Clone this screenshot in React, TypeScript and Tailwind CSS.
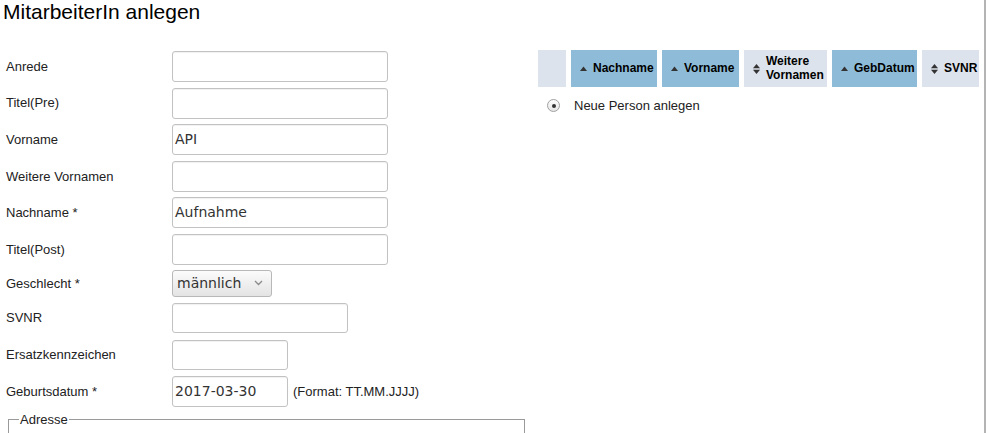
const labelFont = { fontFamily: '"Liberation Sans", Arial, sans-serif' };

function SortUp() {
  return (
    <svg width="7" height="5" viewBox="0 0 7 5" className="shrink-0">
      <path d="M0 5 L3.5 0.5 L7 5 Z" fill="#333" />
    </svg>
  );
}

function SortBoth() {
  return (
    <svg width="7" height="10" viewBox="0 0 7 10" className="shrink-0">
      <path d="M0 4.3 L3.5 0 L7 4.3 Z" fill="#333" />
      <path d="M0 5.7 L3.5 10 L7 5.7 Z" fill="#333" />
    </svg>
  );
}

type Col = { label: string[]; width: number; sorted: boolean };

const columns: Col[] = [
  { label: ['Nachname'], width: 86, sorted: true },
  { label: ['Vorname'], width: 77, sorted: true },
  { label: ['Weitere', 'Vornamen'], width: 83, sorted: false },
  { label: ['GebDatum'], width: 85, sorted: true },
  { label: ['SVNR'], width: 57, sorted: false },
  { label: [''], width: 60, sorted: false },
];

function TextInput({ width, value = '', h = 31 }: { width: number; value?: string; h?: number }) {
  return (
    <div
      className="flex items-center border border-[#c2c2c2] rounded-[3px] bg-white shadow-[inset_0_1px_1px_rgba(0,0,0,0.06)] pl-[2px] text-[14px] text-[#333]"
      style={{ width, height: h, fontFamily: '"DejaVu Sans", sans-serif' }}
    >
      {value}
    </div>
  );
}

function Row({ label, children, className = '' }: { label: string; children: React.ReactNode; className?: string }) {
  return (
    <div className={`flex items-center ${className}`}>
      <div className="w-[166px] text-[13px] text-[#222]">{label}</div>
      {children}
    </div>
  );
}

export default function App() {
  return (
    <div className="w-[990px] h-[433px] bg-white overflow-hidden flex" style={labelFont}>
      <div className="w-[986px] h-full border-r-2 border-[#b4b4b4] overflow-hidden">
        <h1 className="text-[21px] leading-[24px] text-black pl-[3px]">MitarbeiterIn anlegen</h1>

        <div className="flex mt-[26px]">
          {/* Formular */}
          <div className="w-[533px] shrink-0 pt-[1px]">
            <div className="pl-[6px] flex flex-col gap-[5.6px]">
              <Row label="Anrede" className="h-[31px]"><TextInput width={216} /></Row>
              <Row label="Titel(Pre)" className="h-[31px]"><TextInput width={216} /></Row>
              <Row label="Vorname" className="h-[31px]"><TextInput width={216} value="API" /></Row>
              <Row label="Weitere Vornamen" className="h-[31px]"><TextInput width={216} /></Row>
              <Row label="Nachname *" className="h-[31px]"><TextInput width={216} value="Aufnahme" /></Row>
              <Row label="Titel(Post)" className="h-[31px]"><TextInput width={216} /></Row>
            </div>
            <div className="pl-[6px] flex flex-col">
              <Row label="Geschlecht *" className="h-[27px] mt-[5px]">
                <div
                  className="w-[100px] h-[27px] flex items-center justify-between border border-[#b8b8b8] rounded-[3px] bg-gradient-to-b from-[#fbfbfb] to-[#e4e4e4] pl-[4px] pr-[8px] text-[14px] text-[#333]"
                  style={{ fontFamily: '"DejaVu Sans", sans-serif' }}
                >
                  männlich
                  <svg width="9" height="6" viewBox="0 0 9 6">
                    <path d="M1 1 L4.5 4.5 L8 1" stroke="#8a8a8a" strokeWidth="1.3" fill="none" />
                  </svg>
                </div>
              </Row>
              <Row label="SVNR" className="h-[30px] mt-[6px]"><TextInput width={176} h={30} /></Row>
              <Row label="Ersatzkennzeichen" className="h-[30px] mt-[7px]"><TextInput width={116} h={30} /></Row>
              <Row label="Geburtsdatum *" className="h-[31px] mt-[6px]">
                <TextInput width={116} value="2017-03-30" />
                <span className="ml-[5px] text-[13px] text-[#222]">(Format: TT.MM.JJJJ)</span>
              </Row>
            </div>
            <fieldset className="ml-[8px] mt-[3px] w-[517px] h-[40px] border border-[#9a9a9a] px-[10px]">
              <legend className="text-[13px] text-[#222] px-[1px]">Adresse</legend>
            </fieldset>
          </div>

          {/* Personentabelle */}
          <div className="flex-1 overflow-hidden">
            <table className="w-max border-separate border-spacing-x-[5px] border-spacing-y-0 text-[12px]">
              <thead>
                <tr>
                  <th className="h-[37px] bg-[#dde3ed] p-0">
                    <div className="w-[28px]" />
                  </th>
                  {columns.map((c, i) => (
                    <th
                      key={i}
                      className={`h-[37px] p-0 font-bold text-black text-left ${c.sorted ? 'bg-[#8ebcd8]' : 'bg-[#dde3ed]'}`}
                    >
                      <div className="flex items-center gap-[6px] pl-[9px] whitespace-nowrap" style={{ width: c.width }}>
                        {c.label[0] !== '' && (
                          <>
                            {c.sorted ? <SortUp /> : <SortBoth />}
                            <div className="leading-[13.5px]">
                              {c.label.map((l) => (
                                <div key={l}>{l}</div>
                              ))}
                            </div>
                          </>
                        )}
                      </div>
                    </th>
                  ))}
                </tr>
              </thead>
              <tbody>
                <tr>
                  <td className="p-0 pt-[10px] align-top">
                    <div className="flex justify-center pt-[2px] pl-[3px]">
                      <span className="inline-flex items-center justify-center w-[13px] h-[13px] rounded-full border border-[#a0a0a0] bg-gradient-to-b from-[#fdfdfd] to-[#e6e6e6]">
                        <span className="w-[4px] h-[4px] rounded-full bg-[#333]" />
                      </span>
                    </div>
                  </td>
                  <td colSpan={4} className="p-0 pt-[9px] pl-[3px] text-[13px] text-[#222] align-top">
                    Neue Person anlegen
                  </td>
                </tr>
              </tbody>
            </table>
          </div>
        </div>
      </div>
    </div>
  );
}
